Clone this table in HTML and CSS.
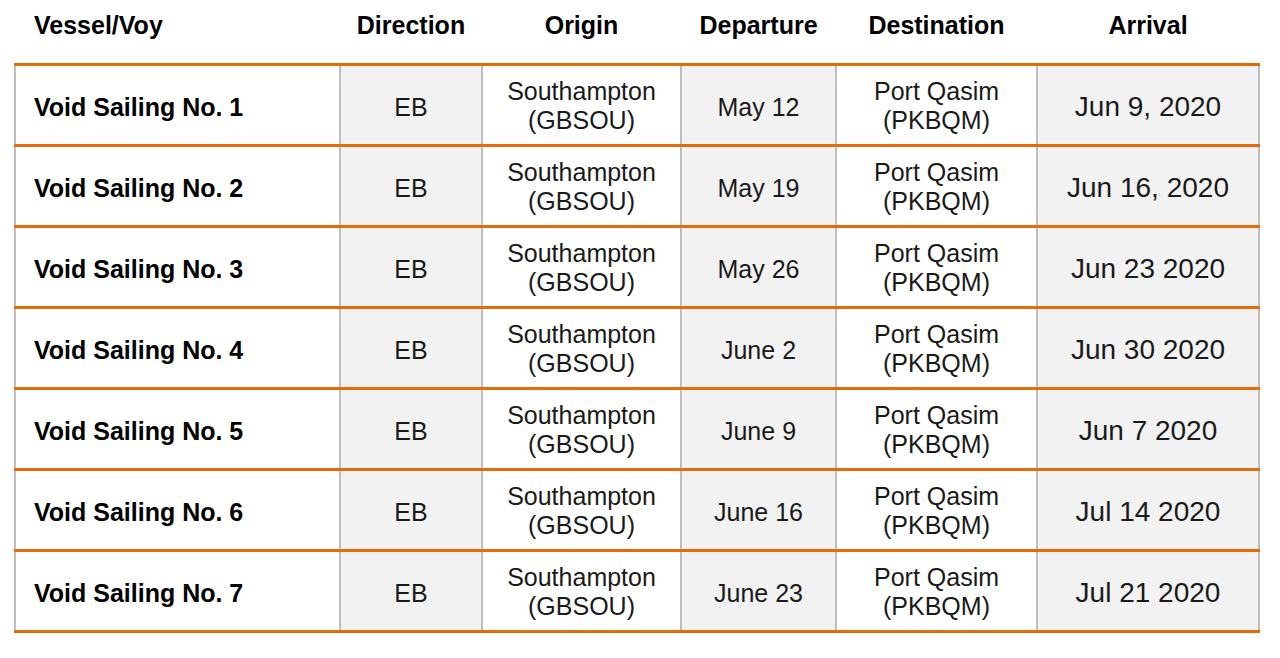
FILE: index.html
```html
<!DOCTYPE html>
<html lang="en">
<head>
<meta charset="utf-8">
<title>Void Sailings</title>
<link rel="stylesheet" href="styles.css">
</head>
<body>
<table class="sched">
  <colgroup>
    <col class="c-vessel">
    <col class="c-dir">
    <col class="c-origin">
    <col class="c-dep">
    <col class="c-dest">
    <col class="c-arr">
  </colgroup>
  <thead>
    <tr>
      <th class="left">Vessel/Voy</th>
      <th>Direction</th>
      <th>Origin</th>
      <th>Departure</th>
      <th>Destination</th>
      <th>Arrival</th>
    </tr>
  </thead>
  <tbody>
    <tr>
      <td class="vessel">Void Sailing No. 1</td>
      <td class="shade">EB</td>
      <td class="place">Southampton<br>(GBSOU)</td>
      <td class="shade">May 12</td>
      <td class="place">Port Qasim<br>(PKBQM)</td>
      <td class="shade arr">Jun 9, 2020</td>
    </tr>
    <tr>
      <td class="vessel">Void Sailing No. 2</td>
      <td class="shade">EB</td>
      <td class="place">Southampton<br>(GBSOU)</td>
      <td class="shade">May 19</td>
      <td class="place">Port Qasim<br>(PKBQM)</td>
      <td class="shade arr">Jun 16, 2020</td>
    </tr>
    <tr>
      <td class="vessel">Void Sailing No. 3</td>
      <td class="shade">EB</td>
      <td class="place">Southampton<br>(GBSOU)</td>
      <td class="shade">May 26</td>
      <td class="place">Port Qasim<br>(PKBQM)</td>
      <td class="shade arr">Jun 23 2020</td>
    </tr>
    <tr>
      <td class="vessel">Void Sailing No. 4</td>
      <td class="shade">EB</td>
      <td class="place">Southampton<br>(GBSOU)</td>
      <td class="shade">June 2</td>
      <td class="place">Port Qasim<br>(PKBQM)</td>
      <td class="shade arr">Jun 30 2020</td>
    </tr>
    <tr>
      <td class="vessel">Void Sailing No. 5</td>
      <td class="shade">EB</td>
      <td class="place">Southampton<br>(GBSOU)</td>
      <td class="shade">June 9</td>
      <td class="place">Port Qasim<br>(PKBQM)</td>
      <td class="shade arr">Jun 7 2020</td>
    </tr>
    <tr>
      <td class="vessel">Void Sailing No. 6</td>
      <td class="shade">EB</td>
      <td class="place">Southampton<br>(GBSOU)</td>
      <td class="shade">June 16</td>
      <td class="place">Port Qasim<br>(PKBQM)</td>
      <td class="shade arr">Jul 14 2020</td>
    </tr>
    <tr>
      <td class="vessel">Void Sailing No. 7</td>
      <td class="shade">EB</td>
      <td class="place">Southampton<br>(GBSOU)</td>
      <td class="shade">June 23</td>
      <td class="place">Port Qasim<br>(PKBQM)</td>
      <td class="shade arr">Jul 21 2020</td>
    </tr>
  </tbody>
</table>
</body>
</html>
```

FILE: styles.css
```css
html, body {
  margin: 0;
  padding: 0;
  background: #ffffff;
}

body {
  padding-left: 14px;
  font-family: "Liberation Sans", Arial, sans-serif;
  color: #1a1a1a;
}

.sched {
  border-collapse: collapse;
  table-layout: fixed;
  width: 1244px;
}

.c-vessel { width: 325px; }
.c-dir { width: 142px; }
.c-origin { width: 199px; }
.c-dep { width: 155px; }
.c-dest { width: 201px; }
.c-arr { width: 222px; }

.sched th {
  height: 64px;
  padding: 11px 0 0;
  box-sizing: border-box;
  vertical-align: top;
  font-size: 25px;
  line-height: 28px;
  font-weight: bold;
  color: #000000;
  text-align: center;
}

.sched th.left {
  text-align: left;
  padding-left: 19px;
}

.sched tbody td {
  height: 81px;
  box-sizing: border-box;
  padding: 5px 0 0;
  border-top: 3px solid #e46c0a;
  border-bottom: 3px solid #e46c0a;
  border-left: 2px solid #bfbfbf;
  border-right: 2px solid #bfbfbf;
  font-size: 25px;
  line-height: 28px;
  text-align: center;
  vertical-align: middle;
}

.sched td.vessel {
  text-align: left;
  padding-left: 18px;
  font-weight: bold;
  color: #000000;
}

.sched td.place {
  padding-top: 2px;
  line-height: 29px;
}

.sched td.shade {
  background: #f2f2f2;
}

.sched td.arr {
  font-size: 28px;
}
```
